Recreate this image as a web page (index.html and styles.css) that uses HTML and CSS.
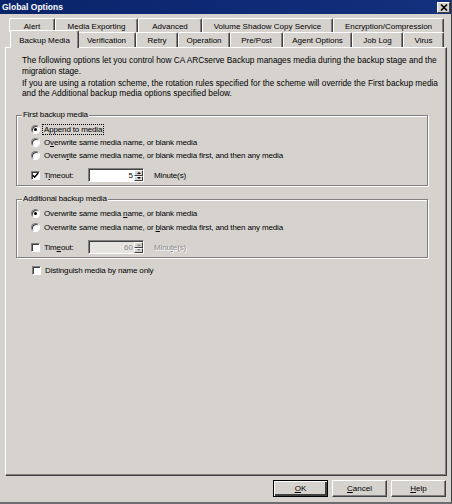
FILE: index.html
```html
<!DOCTYPE html>
<html>
<head>
<meta charset="utf-8">
<title>Global Options</title>
<link rel="stylesheet" href="styles.css">
</head>
<body>
<div class="window">
  <div class="titlebar">
    <span class="title">Global Options</span>
    <span class="close"><svg width="8" height="7" viewBox="0 0 8 7"><path d="M1 0.5 L7 6.5 M7 0.5 L1 6.5" stroke="#000" stroke-width="1.6"/></svg></span>
  </div>
  <div class="tabs">
    <div class="tabrow back">
      <div class="tab">Alert</div>
      <div class="tab">Media Exporting</div>
      <div class="tab">Advanced</div>
      <div class="tab">Volume Shadow Copy Service</div>
      <div class="tab">Encryption/Compression</div>
    </div>
    <div class="tabrow front">
      <div class="tab active">Backup Media</div>
      <div class="tab">Verification</div>
      <div class="tab">Retry</div>
      <div class="tab">Operation</div>
      <div class="tab">Pre/Post</div>
      <div class="tab">Agent Options</div>
      <div class="tab">Job Log</div>
      <div class="tab">Virus</div>
    </div>
  </div>
  <div class="panel">
    <p class="intro">The following options let you control how CA ARCserve Backup manages media during the backup stage and the<br>migration stage.</p>
    <p class="intro second">If you are using a rotation scheme, the rotation rules specified for the scheme will override the First backup media<br>and the Additional backup media options specified below.</p>

    <fieldset class="group first">
      <legend>First backup media</legend>
      <div class="opt"><span class="radio checked"></span><span class="focus">Append to media</span></div>
      <div class="opt"><span class="radio"></span><span>O<u>v</u>erwrite same media name, or blank media</span></div>
      <div class="opt"><span class="radio"></span><span>Overw<u>r</u>ite same media name, or blank media first, and then any media</span></div>
      <div class="opt timeout">
        <span class="check checked"><svg width="7" height="7" viewBox="0 0 7 7"><path d="M0.8 3.2 L2.6 5.2 L6.2 1" fill="none" stroke="#000" stroke-width="1.5"/></svg></span>
        <span class="lbl">T<u>i</u>meout:</span>
        <span class="spin"><span class="val">5</span><span class="arrows"><span class="arr up"></span><span class="arr down"></span></span></span>
        <span>Minute(s)</span>
      </div>
    </fieldset>

    <fieldset class="group additional">
      <legend>Additional backup media</legend>
      <div class="opt"><span class="radio checked"></span><span>Overwrite same media <u>n</u>ame, or blank media</span></div>
      <div class="opt"><span class="radio"></span><span>Overwrite same media name, or <u>b</u>lank media first, and then any media</span></div>
      <div class="opt timeout">
        <span class="check"></span>
        <span class="lbl">Tim<u>e</u>out:</span>
        <span class="spin disabled"><span class="val">60</span><span class="arrows"><span class="arr up"></span><span class="arr down"></span></span></span>
        <span class="dis">Minu<u>t</u>e(s)</span>
      </div>
    </fieldset>

    <div class="opt distinguish"><span class="check"></span><span>Distinguish media by name only</span></div>
  </div>
  <div class="buttons">
    <div class="btn default"><u>O</u>K</div>
    <div class="btn"><u>C</u>ancel</div>
    <div class="btn"><u>H</u>elp</div>
  </div>
</div>
</body>
</html>
```

FILE: styles.css
```css
* { box-sizing: border-box; }
html, body { margin: 0; padding: 0; background: #d6d3ce; }
body { font-family: "Liberation Sans", Arial, sans-serif; font-size: 8px; color: #000; }

.window {
  width: 452px;
  height: 504px;
  background: #d6d3ce;
  border-right: 1px solid #404040;
  border-bottom: 2px solid #6e6e6e;
}

.titlebar {
  height: 14px;
  background: linear-gradient(90deg, #0a246a, #13307e);
  display: flex;
  align-items: center;
  justify-content: space-between;
  padding: 0 1px 0 2px;
}
.title { color: #fff; font-weight: bold; font-size: 8.5px; }
.close {
  width: 13px;
  height: 11px;
  background: #d6d3ce;
  border: 1px solid;
  border-color: #fff #404040 #404040 #fff;
  display: flex;
  align-items: center;
  justify-content: center;
}

.tabs { padding-top: 4px; }
.tabrow { display: grid; height: 14px; }
.back { grid-template-columns: 46px 83px 64px 131px 111px; margin-left: 9px; }
.front { grid-template-columns: 65px 59px 42px 52px 53px 69px 51px 41px; margin-left: 12px; height: 15px; }
.tab {
  display: flex;
  align-items: center;
  justify-content: center;
  border-top: 1px solid #fff;
  border-left: 1px solid #fff;
  border-right: 1px solid #404040;
  box-shadow: inset -1px 0 #808080;
  border-radius: 2px 2px 0 0;
  white-space: nowrap;
  padding-top: 1px;
  background: #d6d3ce;
}
.tab.active { margin: -2px -2px -1px; z-index: 1; }

.panel {
  margin-left: 5px;
  width: 442px;
  height: 429px;
  border-top: 1px solid #fff;
  border-left: 1px solid #fff;
  border-right: 1px solid #404040;
  border-bottom: 1px solid #404040;
  box-shadow: inset -1px -1px #808080;
  padding-top: 7px;
}

.intro { margin: 0 0 0 16px; line-height: 10.5px; white-space: nowrap; font-size: 8.3px; }
.intro.second { margin-top: 1.5px; }

.group {
  margin: 0 0 0 10px;
  padding: 3px 0 3px 0;
  width: 412px;
  min-inline-size: 0;
  border: 1px solid #808080;
  box-shadow: inset 1px 1px #fff, 1px 1px #fff;
  letter-spacing: -0.15px;
}
.group legend {
  margin-left: 5px;
  padding: 0 1px;
  line-height: 10px;
  background: #d6d3ce;
}
.group.first { margin-top: 11.5px; }
.group.additional { margin-top: 8px; padding-top: 2px; }
.group.additional .opt { height: 14px; }
.group .opt.timeout { height: 14px; margin-top: 6px; }

.opt { display: flex; align-items: center; height: 13px; padding-left: 14px; white-space: nowrap; }
.distinguish { margin-top: 6px; padding-left: 25px; letter-spacing: -0.15px; }

.radio {
  width: 9px;
  height: 9px;
  border-radius: 50%;
  background: #fff;
  border: 1px solid;
  border-color: #808080 #fff #fff #808080;
  box-shadow: inset 1px 1px #404040;
  margin-right: 4px;
  display: flex;
  align-items: center;
  justify-content: center;
  flex: none;
}
.radio.checked::after { content: ""; width: 3px; height: 3px; border-radius: 50%; background: #000; }
.focus { outline: 1px dotted #000; padding: 0 1px; margin-left: -1px; }

.check {
  width: 9px;
  height: 9px;
  background: #fff;
  border: 1px solid;
  border-color: #808080 #fff #fff #808080;
  box-shadow: inset 1px 1px #404040;
  margin-right: 4px;
  margin-left: 1px;
  display: flex;
  align-items: center;
  justify-content: center;
  flex: none;
}
.timeout .check { margin-left: 0; }
.lbl { width: 44px; }

.spin {
  width: 56px;
  height: 14px;
  display: flex;
  border: 1px solid;
  border-color: #808080 #fff #fff #808080;
  box-shadow: inset 1px 1px #404040;
  background: #fff;
  margin-right: 10px;
  padding: 1px 0 0 1px;
  letter-spacing: 0;
}
.spin .val { flex: 1; text-align: right; line-height: 11px; padding-right: 1px; }
.arrows { width: 9px; display: flex; flex-direction: column; }
.arr {
  flex: 1;
  background: #d6d3ce;
  border: 1px solid;
  border-color: #fff #404040 #404040 #fff;
  display: flex;
  align-items: center;
  justify-content: center;
}
.arr.up::after { content: ""; border-left: 2px solid transparent; border-right: 2px solid transparent; border-bottom: 2px solid #000; }
.arr.down::after { content: ""; border-left: 2px solid transparent; border-right: 2px solid transparent; border-top: 2px solid #000; }
.spin.disabled { background: #e6e4e0; }
.spin.disabled .val { color: #8a8a8a; }
.spin.disabled .arr.up::after { border-bottom-color: #8a8a8a; }
.spin.disabled .arr.down::after { border-top-color: #8a8a8a; }
.dis { color: #8a8a8a; text-shadow: 1px 1px #fff; }

.buttons {
  display: flex;
  justify-content: flex-end;
  gap: 4px;
  padding-right: 5px;
  margin-top: 4px;
}
.btn {
  width: 55px;
  height: 17px;
  display: flex;
  align-items: center;
  justify-content: center;
  border: 1px solid;
  border-color: #fff #404040 #404040 #fff;
  box-shadow: inset -1px -1px #808080;
}
.btn.default {
  border: 1px solid #000;
  box-shadow: inset 1px 1px #fff, inset -2px -2px #404040, inset -1px -1px #808080;
}
```
